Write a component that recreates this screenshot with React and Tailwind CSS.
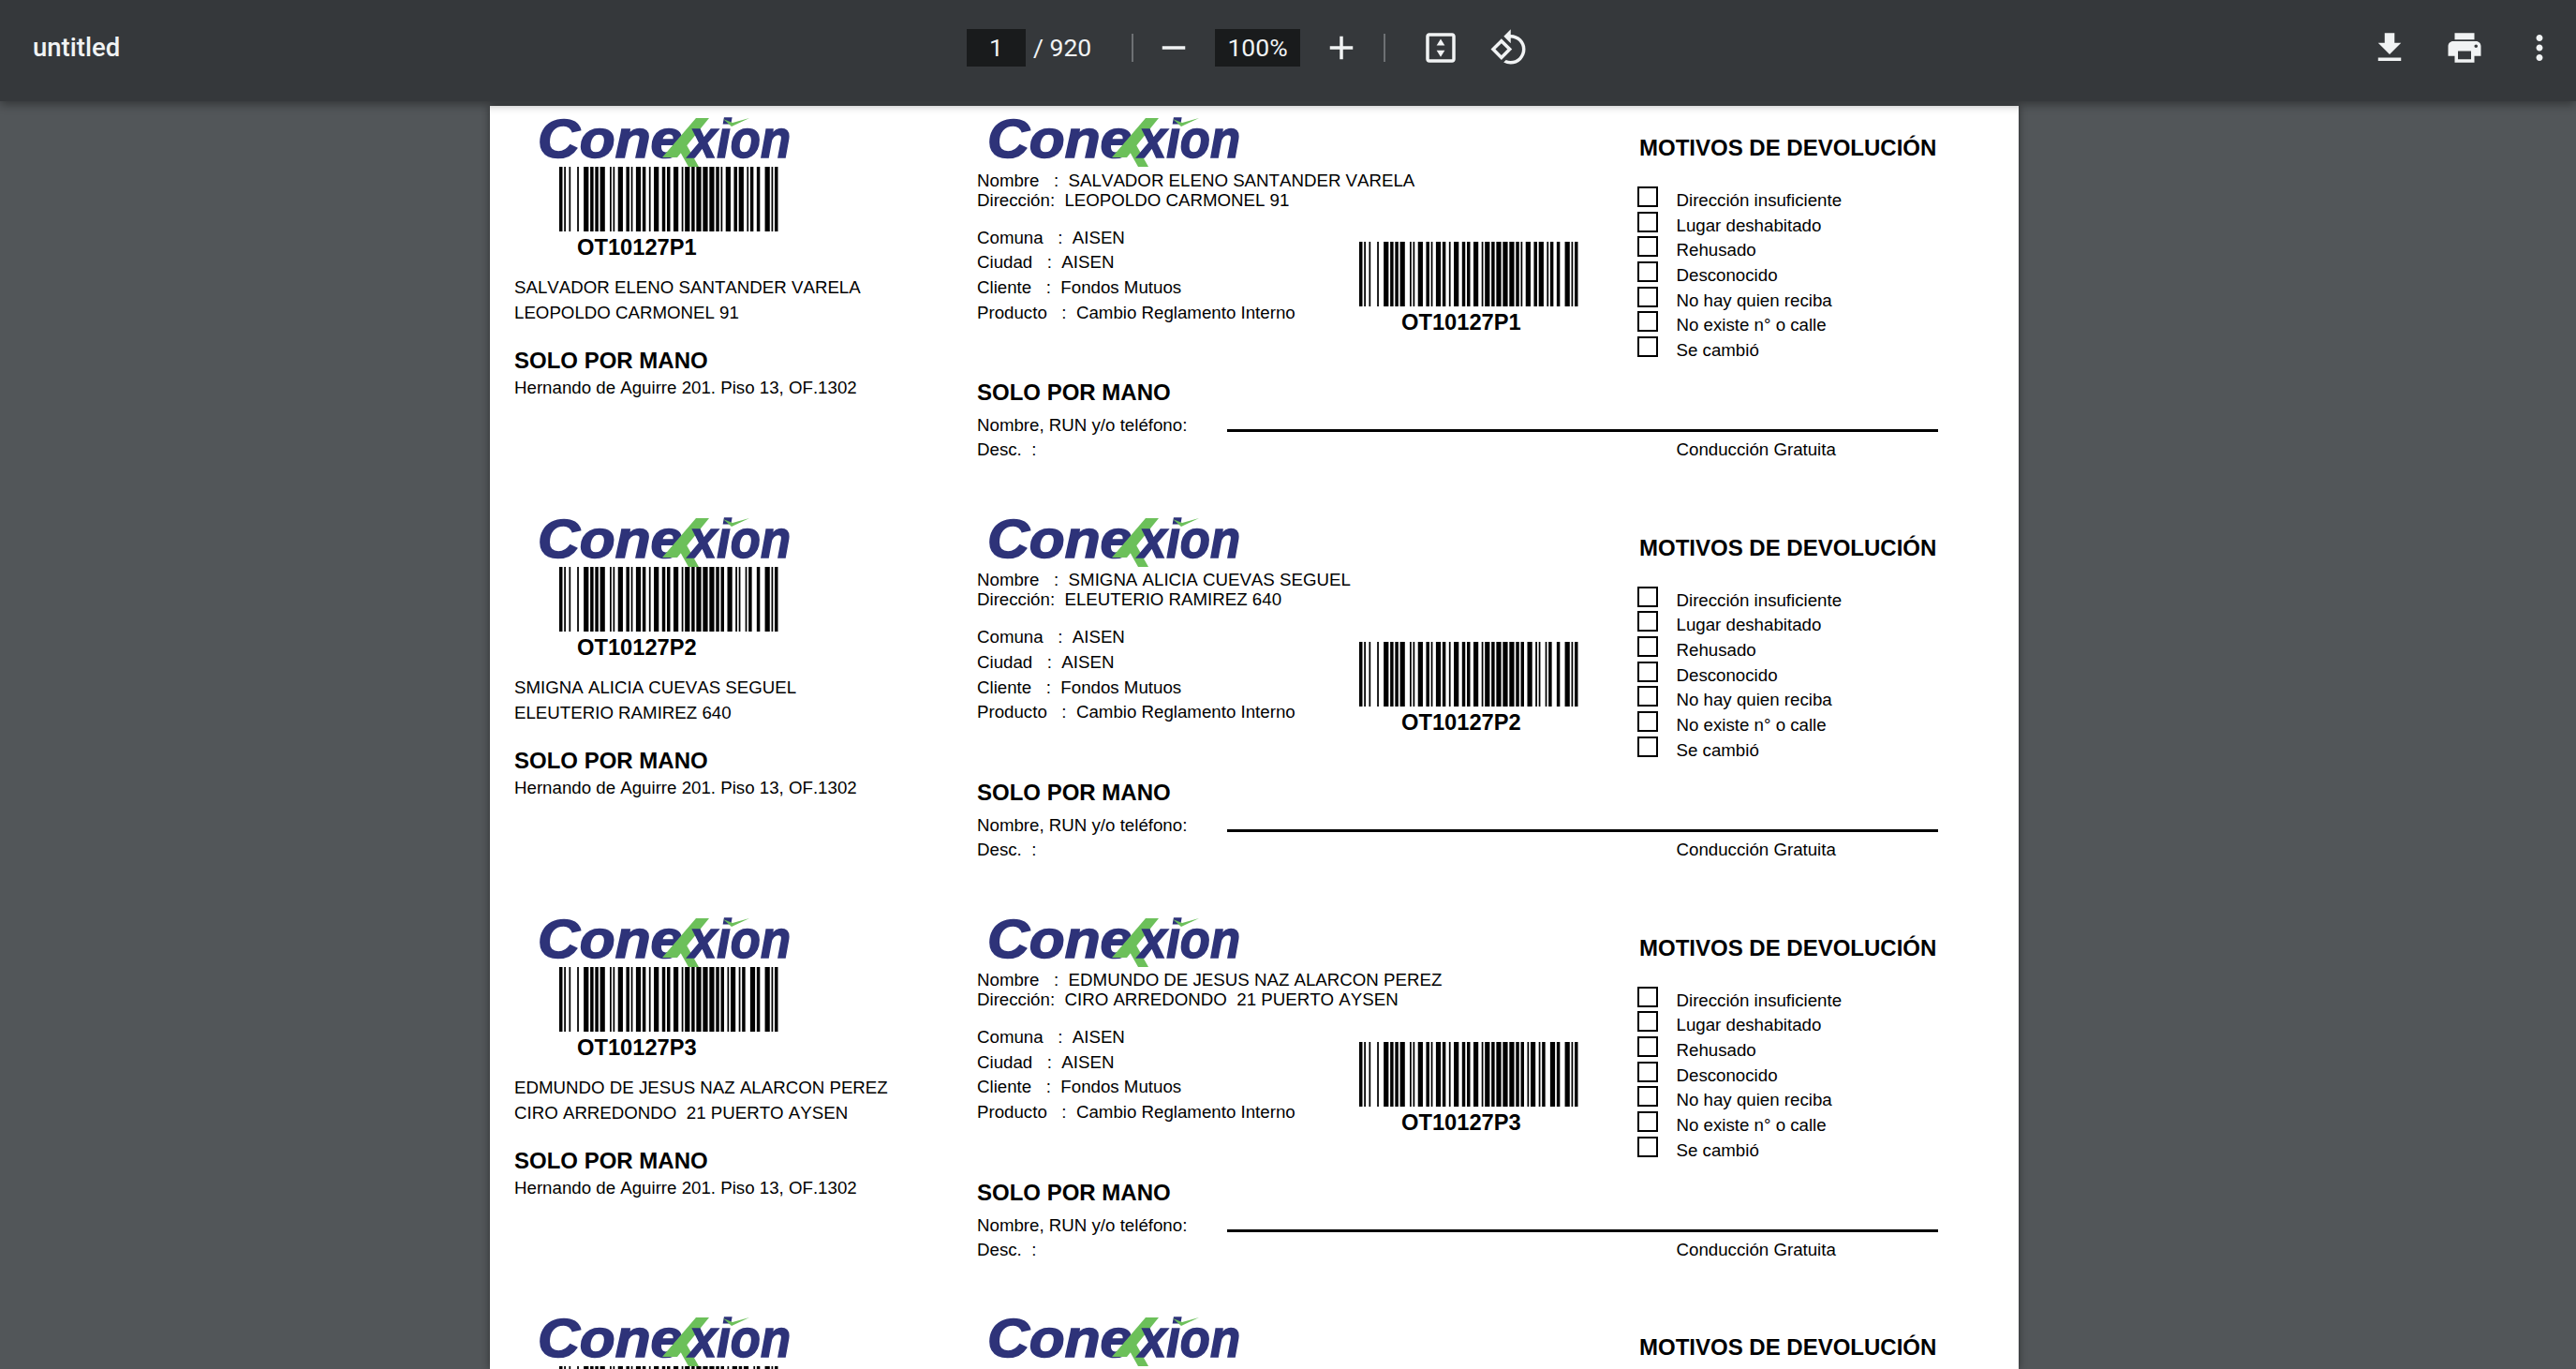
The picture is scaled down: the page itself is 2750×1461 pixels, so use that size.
const CODE128 = "212222,222122,222221,121223,121322,131222,122213,122312,132212,221213,221312,231212,112232,122132,122231,113222,123122,123221,223211,221132,221231,213212,223112,312131,311222,321122,321221,312212,322112,322211,212123,212321,232121,111323,131123,131321,112313,132113,132311,211313,231113,231311,112133,112331,132131,113123,113321,133121,313121,211331,231131,213113,213311,213131,311123,311321,331121,312113,312311,332111,314111,221411,431111,111224,111422,121124,121421,141122,141221,112214,112412,122114,122411,142112,142211,241211,221114,413111,241112,134111,111242,121142,121241,114212,124112,124211,411212,421112,421211,212141,214121,412121,111143,111341,131141,114113,114311,411113,411311,113141,114131,311141,411131,211412,211214,211232,2331112".split(",");

const reasons = ["Dirección insuficiente", "Lugar deshabitado", "Rehusado", "Desconocido", "No hay quien reciba", "No existe n° o calle", "Se cambió"];

const labels = [
  { code: "OT10127P1", name: "SALVADOR ELENO SANTANDER VARELA", address: "LEOPOLDO CARMONEL 91" },
  { code: "OT10127P2", name: "SMIGNA ALICIA CUEVAS SEGUEL", address: "ELEUTERIO RAMIREZ 640" },
  { code: "OT10127P3", name: "EDMUNDO DE JESUS NAZ ALARCON PEREZ", address: "CIRO ARREDONDO  21 PUERTO AYSEN" },
];

function barsFor(code) {
  const values = [...code].map((c) => c.charCodeAt(0) - 32);
  const check = values.reduce((sum, v, i) => sum + v * (i + 1), 104) % 103;
  const pattern = [104, ...values, check, 106].map((v) => CODE128[v]).join("");
  const bars = [];
  let x = 0;
  [...pattern].forEach((w, i) => {
    if (i % 2 === 0) bars.push({ x, w: Number(w) });
    x += Number(w);
  });
  return bars;
}

function Barcode({ code }) {
  return (
    <svg width="233.5" height="69" viewBox="0 0 134 69" preserveAspectRatio="none" className="relative block">
      {barsFor(code).map((b) => (
        <rect key={b.x} x={b.x} y="0" width={b.w} height="69" fill="#000" />
      ))}
    </svg>
  );
}

function Logo() {
  const text = { fill: "#2e3379", stroke: "#2e3379", strokeWidth: 1.6, fontFamily: "'Liberation Sans', sans-serif", fontWeight: 700, fontStyle: "italic", fontSize: 58 };
  return (
    <svg width="270" height="53" viewBox="0 0 270 53" className="block overflow-visible">
      <text {...text} x="-2" y="42.5" textLength="155" lengthAdjust="spacingAndGlyphs">Cone</text>
      <polygon points="167,1 181,1 147,43 131,43" fill="#6cc05a" />
      <polygon points="145,28 156,28 170,53 159,53" fill="#6cc05a" />
      <text {...text} x="160" y="42.5" textLength="108" lengthAdjust="spacingAndGlyphs">xion</text>
      <polygon points="196,2 206,6 224,1 205,10" fill="#6cc05a" />
    </svg>
  );
}

function Icon({ d, className = "" }) {
  return (
    <svg width="42" height="42" viewBox="0 0 24 24" fill="#f1f3f4" className={`shrink-0 ${className}`}>
      <path d={d} />
    </svg>
  );
}

function Toolbar() {
  return (
    <div className="relative z-10 flex h-[108px] shrink-0 items-center bg-[#35383b] pb-[6px] pr-[18px] font-['Roboto',sans-serif] text-[26.5px] text-[#f1f3f4] shadow-[0_3px_10px_rgba(0,0,0,0.4)]">
      <div className="w-[1032px] pl-[35px] text-[27.5px] font-medium">untitled</div>
      <div className="flex h-[40px] w-[63px] items-center justify-center bg-[#191b1c]">1</div>
      <div className="ml-[8px] w-[63px] whitespace-pre">/ 920</div>
      <div className="ml-[42px] h-[30px] w-[2px] bg-[#6d7073]" />
      <Icon className="ml-[22px]" d="M19 13H5v-2h14v2z" />
      <div className="ml-[23px] flex h-[40px] w-[91px] items-center justify-center bg-[#191b1c]">100%</div>
      <Icon className="ml-[22.5px]" d="M19 13h-6v6h-2v-6H5v-2h6V5h2v6h6v2z" />
      <div className="ml-[24.5px] h-[30px] w-[2px] bg-[#6d7073]" />
      <Icon className="ml-[38px]" d="M19 3H5c-1.1 0-2 .9-2 2v14c0 1.1.9 2 2 2h14c1.1 0 2-.9 2-2V5c0-1.1-.9-2-2-2zm0 16H5V5h14v14zM12 6.5l2.5 4h-5zM12 17.5l-2.5-4h5z" />
      <Icon className="ml-[31px]" d="M7.34 6.41L.86 12.9l6.49 6.48 6.49-6.48-6.5-6.49zM3.69 12.9l3.66-3.66L11 12.9l-3.66 3.66-3.65-3.66zm15.67-6.26C17.61 4.88 15.3 4 13 4V.76L8.76 5 13 9.24V6c1.79 0 3.58.68 4.95 2.05 2.73 2.73 2.73 7.17 0 9.9C16.58 19.32 14.79 20 13 20c-.97 0-1.94-.21-2.84-.61l-1.49 1.49C10.02 21.62 11.51 22 13 22c2.3 0 4.61-.88 6.36-2.64 3.52-3.51 3.52-9.21 0-12.72z" />
      <Icon className="ml-auto" d="M19 9h-4V3H9v6H5l7 7 7-7zM5 18v2h14v-2H5z" />
      <Icon className="ml-[38px]" d="M19 8H5c-1.66 0-3 1.34-3 3v6h4v4h12v-4h4v-6c0-1.66-1.34-3-3-3zm-3 11H8v-5h8v5zm3-7c-.55 0-1-.45-1-1s.45-1 1-1 1 .45 1 1-.45 1-1 1zm-1-9H6v4h12V3z" />
      <Icon className="ml-[38px]" d="M12 8c1.1 0 2-.9 2-2s-.9-2-2-2-2 .9-2 2 .9 2 2 2zm0 2c-1.1 0-2 .9-2 2s.9 2 2 2 2-.9 2-2-.9-2-2-2zm0 6c-1.1 0-2 .9-2 2s.9 2 2 2 2-.9 2-2-.9-2-2-2z" />
    </div>
  );
}

function Label({ code, name, address }) {
  return (
    <div className="flex h-[426.8px] whitespace-pre pl-[26px] font-['Liberation_Sans',Arial,sans-serif] text-[18.7px] text-black [font-kerning:none]">
      <div className="w-[494px] shrink-0">
        <div className="ml-[27px] pt-[12px]"><Logo /></div>
        <div className="ml-[48px]"><Barcode code={code} /></div>
        <div className="ml-[67px] mt-[5px] text-[23.7px] font-bold leading-[24px]">{code}</div>
        <div className="mt-[17px] leading-[27px]">{name}</div>
        <div className="leading-[27px]">{address}</div>
        <div className="mt-[26px] text-[24px] font-bold leading-[24px]">SOLO POR MANO</div>
        <div className="mt-[5px] leading-[24px]">Hernando de Aguirre 201. Piso 13, OF.1302</div>
      </div>
      <div className="w-[1090px] shrink-0">
        <div className="flex h-[294px]">
          <div className="w-[408px] shrink-0">
            <div className="ml-[13px] pt-[12px]"><Logo /></div>
            <div className="mt-[3.5px] leading-[21px]">{`Nombre   :  ${name}`}</div>
            <div className="leading-[21px]">{`Dirección:  ${address}`}</div>
            <div className="mt-[17px] leading-[26.67px]">Comuna   :  AISEN</div>
            <div className="leading-[26.67px]">Ciudad   :  AISEN</div>
            <div className="leading-[26.67px]">Cliente   :  Fondos Mutuos</div>
            <div className="leading-[26.67px]">Producto   :  Cambio Reglamento Interno</div>
          </div>
          <div className="w-[299px] shrink-0 pt-[145px]">
            <Barcode code={code} />
            <div className="ml-[45px] mt-[5px] text-[23.7px] font-bold leading-[24px]">{code}</div>
          </div>
          <div className="pt-[31px]">
            <div className="text-[24px] font-bold leading-[28px]">MOTIVOS DE DEVOLUCIÓN</div>
            <div className="-ml-[2px] mt-[27px]">
              {reasons.map((reason) => (
                <div key={reason} className="flex h-[26.67px]">
                  <div className="box-border h-[22px] w-[22px] shrink-0 border-[2.5px] border-black" />
                  <div className="ml-[19.5px] mt-[3px] leading-[24px]">{reason}</div>
                </div>
              ))}
            </div>
          </div>
        </div>
        <div className="text-[24px] font-bold leading-[24px]">SOLO POR MANO</div>
        <div className="mt-[11px] flex leading-[24px]">
          <div className="w-[267px] shrink-0">Nombre, RUN y/o teléfono:</div>
          <div className="mt-[16px] h-[3px] w-[759px] bg-black" />
        </div>
        <div className="mt-[2px] flex leading-[24px]">
          <div className="w-[746.5px] shrink-0">Desc.  :</div>
          <div>Conducción Gratuita</div>
        </div>
      </div>
    </div>
  );
}

// the last label only shows its top strip in the window
function PartialLabel() {
  return (
    <div className="flex h-[68px] overflow-hidden pl-[26px] font-['Liberation_Sans',Arial,sans-serif] text-black [font-kerning:none]">
      <div className="w-[494px] shrink-0">
        <div className="ml-[27px] pt-[12px]"><Logo /></div>
        <div className="ml-[48px]"><Barcode code="OT10127P4" /></div>
      </div>
      <div className="w-[408px] shrink-0">
        <div className="ml-[13px] pt-[12px]"><Logo /></div>
      </div>
      <div className="ml-[299px] pt-[31px] text-[24px] font-bold leading-[28px]">MOTIVOS DE DEVOLUCIÓN</div>
    </div>
  );
}

export default function App() {
  return (
    <div className="flex h-[1461px] w-[2750px] flex-col overflow-hidden bg-[#525659]">
      <Toolbar />
      <div className="ml-[523px] mt-[5px] w-[1632px] shrink-0 bg-white shadow-[0_0_8px_rgba(0,0,0,0.45)]">
        {labels.map((label) => (
          <Label key={label.code} {...label} />
        ))}
        <PartialLabel />
      </div>
    </div>
  );
}
